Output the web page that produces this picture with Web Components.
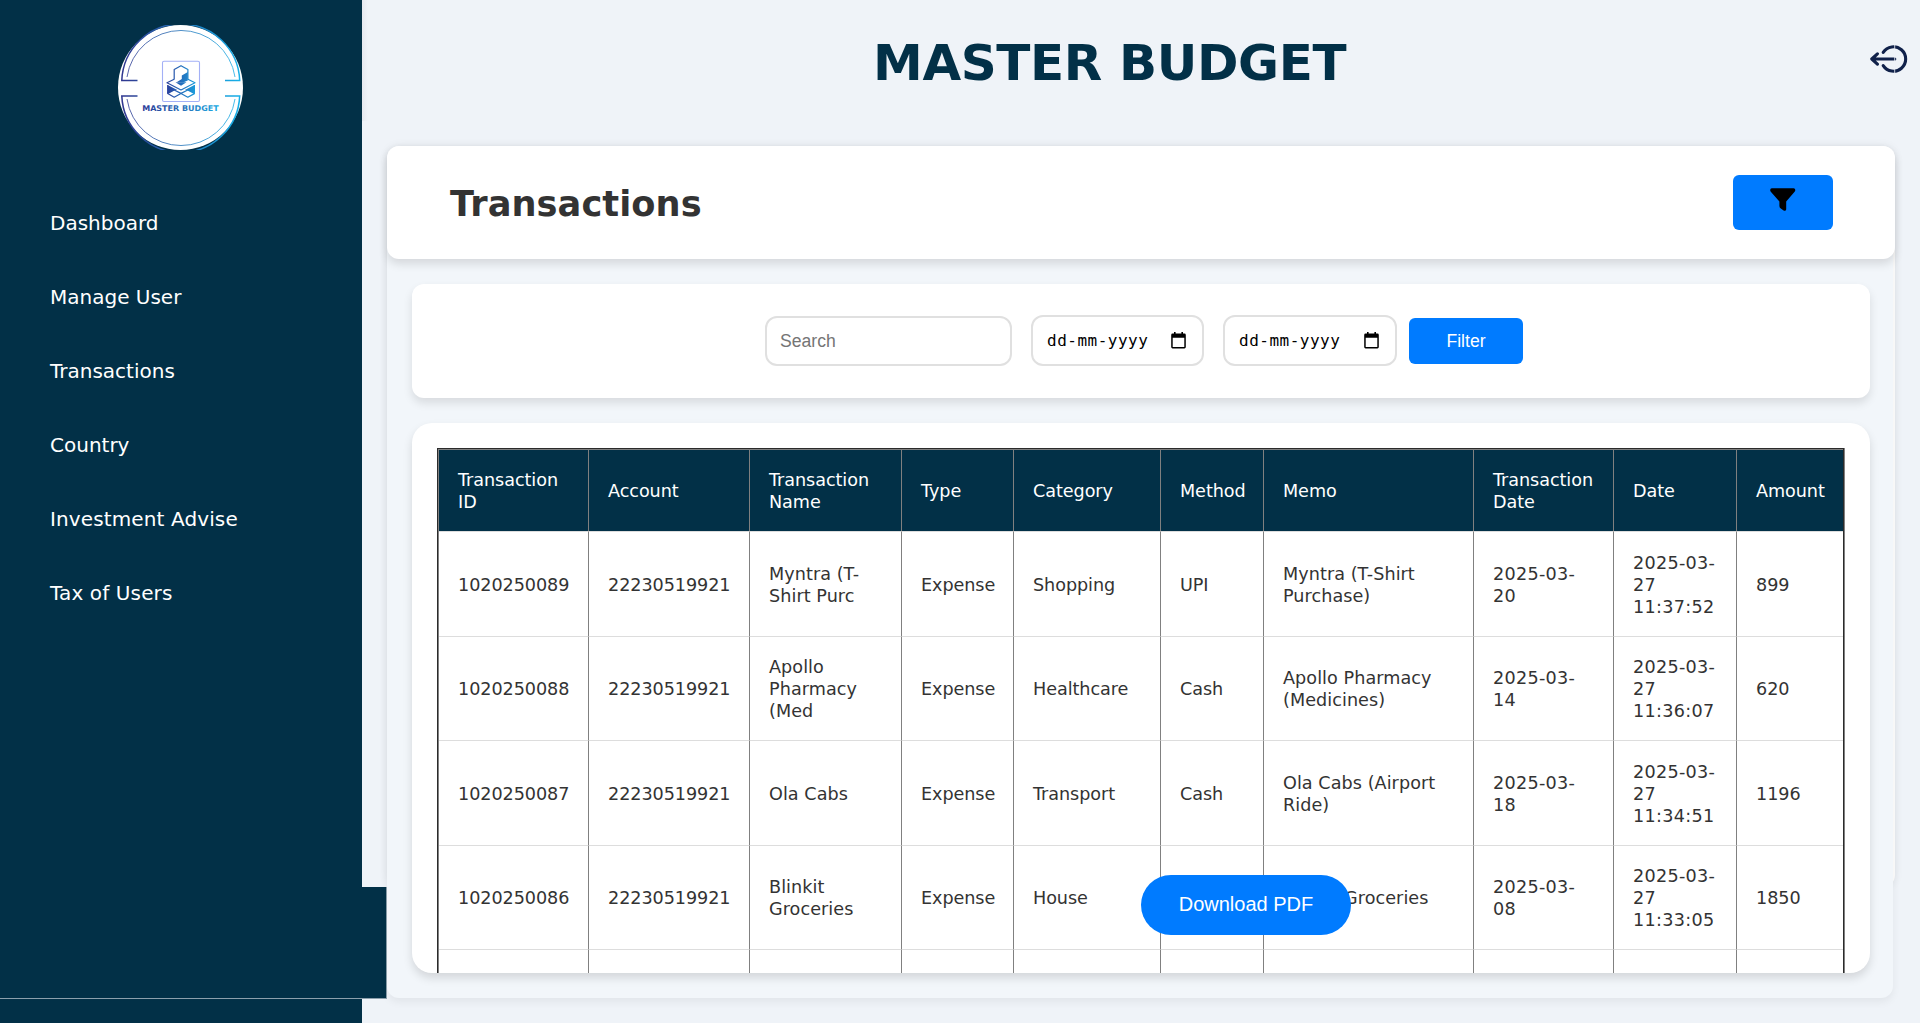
<!DOCTYPE html>
<html lang="en">
<head>
<meta charset="utf-8">
<title>Master Budget</title>
<style>
html,body{margin:0;height:1023px;overflow:hidden;background:#eff3f8;color:#333;font-family:Verdana,"DejaVu Sans",sans-serif}
</style>
</head>
<body>
<budget-app></budget-app>
<script>
const define=(name,html,setup)=>customElements.define(name,class extends HTMLElement{
  constructor(){super();this.attachShadow({mode:'open'}).innerHTML=html;if(setup)setup(this.shadowRoot,this)}
});

define('brand-logo',`<style>:host{display:block;width:125px;height:125px}svg{display:block}</style>
<svg width="125" height="125" viewBox="0 0 125 125" fill="none">
<defs><linearGradient id="g" gradientUnits="userSpaceOnUse" x1="3" y1="0" x2="122" y2="0"><stop stop-color="#30368f"/><stop offset=".5" stop-color="#2472b8"/><stop offset="1" stop-color="#17b0e8"/></linearGradient>
<linearGradient id="h" gradientUnits="userSpaceOnUse" x1="48" y1="0" x2="78" y2="0"><stop stop-color="#2b3c9a"/><stop offset="1" stop-color="#1b9fdd"/></linearGradient>
<linearGradient id="t" gradientUnits="userSpaceOnUse" x1="24" y1="0" x2="101" y2="0"><stop stop-color="#283a98"/><stop offset=".5" stop-color="#2a6cb5"/><stop offset="1" stop-color="#1da9e3"/></linearGradient></defs>
<circle cx="62.5" cy="62.5" r="62.5" fill="#fff"/>
<g stroke="url(#g)"><path stroke-width="1.5" d="M19.5 55.4H3.8A59 59 0 0 1 121.7 55.4H107M19.5 70.9H3.8A59 59 0 0 0 121.7 70.9H107"/>
<path stroke-width=".8" d="M9 52A54.6 54.6 0 0 1 117 52M9 74A54.6 54.6 0 0 0 117 74"/></g>
<rect x="44.5" y="36.3" width="37" height="40.2" rx="1.5" stroke="#a3b0f6" stroke-width="1.1"/>
<g stroke="url(#h)" stroke-width="1.2" stroke-linejoin="round">
<path d="M56.2 54.5V44.6L63 40.7l6.9 3.9v9.9"/>
<path fill="url(#h)" stroke="none" d="M63.8 50.5l6-3.5V55.5L65 57.5 59 57 63.8 54z"/>
<path d="M56.2 54.3L49 57.8l14 7.2 14-7.2-7.1-3.5"/>
<path fill="url(#h)" stroke="none" d="M57.5 57.2h11L63 60.8z"/>
<path d="M49.7 60v8.6l6.5 3.6L63 68.4l6.8 3.8 6.6-3.6V60M49.7 68.4L56.2 65l6.8 3.4L69.8 65l6.6 3.4"/>
<path fill="url(#h)" stroke="none" d="M49.7 60l9.5 4.9-3 .4-6.5 3.3zM76.4 60l-9.5 4.9 3 .4 6.5 3.3z"/></g>
<text x="24.2" y="85.6" fill="url(#t)" font-family="DejaVu Sans,sans-serif" font-size="7.9" font-weight="700" textLength="76.5" lengthAdjust="spacingAndGlyphs">MASTER BUDGET</text>
</svg>`);

define('nav-link',`<style>:host{display:flex;align-items:center;height:74px;padding-left:50px;color:#fff;font-size:20px}</style><slot></slot>`);

define('side-bar',`<style>
:host{display:flex;flex-direction:column;width:362px;height:1023px;background:#023047;flex:none;box-sizing:border-box;padding-top:25px}
brand-logo{margin-left:118px;flex:none}
nav{margin-top:36px;flex:none}
.wide{letter-spacing:.12px}
.foot{margin-top:auto;width:386px;height:111px;background:#023047;border-right:1px solid #8c9fac;border-bottom:1px solid #8c9fac;margin-bottom:24px;flex:none}
</style><brand-logo></brand-logo><nav><nav-link>Dashboard</nav-link><nav-link>Manage User</nav-link><nav-link>Transactions</nav-link><nav-link>Country</nav-link><nav-link class="wide">Investment Advise</nav-link><nav-link class="wide">Tax of Users</nav-link></nav><div class="foot"></div>`);

define('page-header',`<style>
:host{display:flex;height:121px;box-sizing:border-box;align-items:flex-start;background:linear-gradient(90deg,#e6e9ef,#eff3f8 6px)}
h1{margin:0;margin-left:511px;padding-top:31px;font-size:50px;line-height:64px;color:#023047;white-space:nowrap;letter-spacing:-.38px}
svg{margin:44px 12px 0 auto}
</style><h1>MASTER BUDGET</h1>
<svg width="38" height="30" viewBox="0 0 38 30" fill="none" stroke="#10214a" stroke-width="3.1" stroke-linecap="round" stroke-linejoin="round"><path d="M13.2 8.4A12.2 12.2 0 1 1 13.2 21.6"/><path d="M7.4 9.8L1.8 15 7.4 20.2M2.4 15H24.8"/><path d="M24.7 0V30" stroke="#eff3f8" stroke-width=".8" stroke-linecap="butt"/></svg>`);

define('title-card',`<style>
:host{display:flex;align-items:center;width:1508px;height:113px;box-sizing:border-box;padding:0 62px 0 63px;background:#fff;border-radius:12px;box-shadow:0 5px 10px rgba(0,0,0,.12)}
h2{margin:2px 0 0;font-size:35.2px;letter-spacing:.07px}
.b{margin-left:auto;width:100px;height:55px;border-radius:6px;background:#007bff;display:flex;justify-content:center;align-items:flex-start}
svg{margin-top:13px;margin-left:-1px}
</style><h2><slot></slot></h2><div class="b"><svg width="26" height="24" viewBox="0 0 26 24"><path d="M1.8.2H23.6Q25.3.2 25.3 2 25.3 3 24.6 3.8L16.2 13.6V21.6Q15.6 23.6 13.6 22.4L10.8 20.6Q9.4 19.6 9.4 18V13.6L.8 3.8Q.2 3 .2 2 .2.2 1.8.2Z"/></svg></div>`);

define('date-box',`<style>
:host{display:flex;align-items:center;width:173px;height:51px;box-sizing:border-box;border:2px solid #e0e0e0;border-radius:12px;padding:0 16px 0 14px;font:16px "DejaVu Sans Mono",monospace;color:#000}
span{letter-spacing:.5px;white-space:pre}
svg{margin-left:auto}
</style><span>dd-mm-yyyy</span><svg width="15" height="17" viewBox="0 0 15 17"><path fill-rule="evenodd" d="M3 0h1.6v1.6h5.8V0H12v1.6h1.4q1.4 0 1.4 1.4v12q0 1.4-1.4 1.4H1.6Q.2 16.4.2 15V3q0-1.4 1.4-1.4H3zM1.7 5.8V15h11.6V5.8z"/></svg>`);

define('filter-bar',`<style>
:host{display:flex;align-items:flex-start;width:1458px;height:114px;box-sizing:border-box;padding:31px 0 0 353px;background:#fff;border-radius:12px;box-shadow:0 5px 10px rgba(0,0,0,.11);font-family:"Liberation Sans",sans-serif;font-size:17.6px}
.s{width:247px;height:50px;box-sizing:border-box;border:2px solid #e0e0e0;border-radius:12px;margin-top:1px;padding-left:13px;line-height:46px;color:#757575}
date-box{margin-left:19px}
.f{width:114px;height:46px;line-height:46px;text-align:center;background:#007bff;color:#fff;border-radius:6px;margin:3px 0 0 12px}
date-box+date-box{width:174px}
</style><div class="s">Search</div><date-box></date-box><date-box></date-box><div class="f">Filter</div>`);

const heads=['Transaction ID','Account','Transaction Name','Type','Category','Method','Memo','Transaction Date','Date','Amount'];
const widths=[150,161,152,112,147,103,210,140,123,106];
const rows=[
['1020250089','22230519921','Myntra (T-<br>Shirt Purc','Expense','Shopping','UPI','Myntra (T-Shirt<br>Purchase)','2025-03-<br>20','2025-03-<br>27<br>11:37:52','899'],
['1020250088','22230519921','Apollo<br>Pharmacy<br>(Med','Expense','Healthcare','Cash','Apollo Pharmacy<br>(Medicines)','2025-03-<br>14','2025-03-<br>27<br>11:36:07','620'],
['1020250087','22230519921','Ola Cabs','Expense','Transport','Cash','Ola Cabs (Airport<br>Ride)','2025-03-<br>18','2025-03-<br>27<br>11:34:51','1196'],
['1020250086','22230519921','Blinkit<br>Groceries','Expense','House','','Blinkit Groceries','2025-03-<br>08','2025-03-<br>27<br>11:33:05','1850'],
['','','','','','','','','','']];
define('transaction-table',`<style>
:host{display:block;width:1458px;height:550px;box-sizing:border-box;padding:25px 25px 0;background:#fff;border-radius:20px;box-shadow:0 5px 10px rgba(0,0,0,.13);font-size:17.6px;line-height:22px}
.clip{height:525px;overflow:hidden}
.frame{border:1px solid #2b2b2b;width:1405px;box-shadow:1px 0 #808080}
table{border:1px solid #808080;border-right:0;border-bottom:0;border-spacing:0;table-layout:fixed;width:1405px}
th,td{padding:0 0 0 19px;text-align:left;font-weight:400;white-space:nowrap;border-right:1px solid #808080;border-bottom:1px solid #ddd;letter-spacing:-.06px}
.odd td{padding-top:1px}
td:nth-child(3),td:nth-child(7){letter-spacing:.06px}
td:nth-child(8),td:nth-child(9){letter-spacing:.3px}
th:last-child,td:last-child{border-right:0}
th{background:#023047;color:#fff;background-clip:padding-box}
</style><div class="clip"><div class="frame"><table></table></div></div>`,root=>{
  const hs=[105,104,105,104,105];
  root.querySelector('table').innerHTML='<colgroup>'+widths.map(w=>`<col style="width:${w}px">`).join('')+'</colgroup><tr style="height:82px">'+heads.map(h=>`<th>${h.replace(' ','<br>')}</th>`).join('')+'</tr>'+rows.map((r,i)=>`<tr class="${i%2?'':'odd'}" style="height:${hs[i]}px">`+r.map(c=>`<td>${c}</td>`).join('')+'</tr>').join('');
});

define('download-button',`<style>:host{position:absolute;left:1141px;top:875px;width:210px;height:60px;line-height:58px;border-radius:30px;background:#007bff;color:#fff;text-align:center;font-family:"Liberation Sans",sans-serif;font-size:20px}</style><slot></slot>`);

define('content-panel',`<style>
:host{display:block;width:1508px;height:741px;margin:25px 0 0 25px;background:#fdfdfd;border-radius:12px;box-shadow:0 0 10px rgba(0,0,0,.07)}
.in{display:flex;flex-direction:column;gap:25px;width:1506px;height:852px;background:#f2f6fa;border-radius:12px;box-shadow:0 4px 8px rgba(0,0,0,.06)}
filter-bar,transaction-table{margin-left:25px;flex:none}
title-card{flex:none}
</style><div class="in"><title-card>Transactions</title-card><filter-bar></filter-bar><transaction-table></transaction-table></div>`);

define('budget-app',`<style>:host{display:flex;width:1920px;height:1023px;position:relative}main{flex:1;min-width:0}</style>
<side-bar></side-bar><main><page-header></page-header><content-panel></content-panel></main><download-button>Download PDF</download-button>`);
</script>
</body>
</html>
